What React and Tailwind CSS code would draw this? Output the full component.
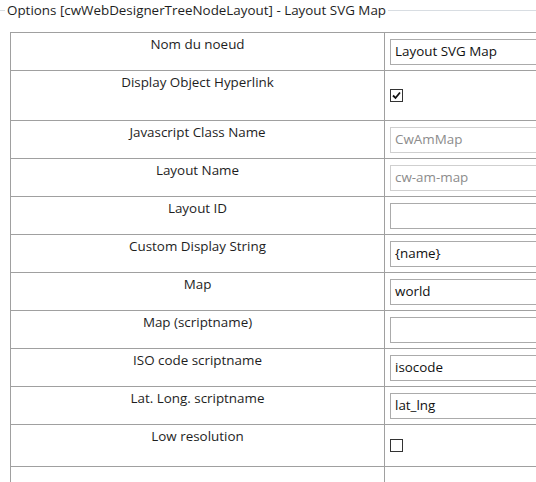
import React from "react";

const rows = [
  { label: "Nom du noeud", type: "text", value: "Layout SVG Map", h: "h-[38px]" },
  { label: "Display Object Hyperlink", type: "check", checked: true, h: "h-[50px]" },
  { label: "Javascript Class Name", type: "text", value: "CwAmMap", disabled: true, h: "h-[38px]" },
  { label: "Layout Name", type: "text", value: "cw-am-map", disabled: true, h: "h-[38px]" },
  { label: "Layout ID", type: "text", value: "", h: "h-[38px]" },
  { label: "Custom Display String", type: "text", value: "{name}", h: "h-[38px]" },
  { label: "Map", type: "text", value: "world", h: "h-[38px]" },
  { label: "Map (scriptname)", type: "text", value: "", h: "h-[38px]" },
  { label: "ISO code scriptname", type: "text", value: "isocode", h: "h-[38px]" },
  { label: "Lat. Long. scriptname", type: "text", value: "lat_lng", h: "h-[38px]" },
  { label: "Low resolution", type: "check", checked: false, h: "h-[42px]" },
  { label: "", type: "empty", h: "h-[40px]" },
];

function Checkbox({ checked }) {
  return (
    <div className="flex h-[13px] w-[13px] items-center justify-center border border-[#333333] bg-white">
      {checked && (
        <svg width="9" height="9" viewBox="0 0 9 9">
          <path d="M1 4.5 L3.5 7 L8 1.5" fill="none" stroke="#111" strokeWidth="1.8" />
        </svg>
      )}
    </div>
  );
}

export default function App() {
  return (
    <div
      className="h-[482px] w-[536px] overflow-hidden bg-white text-[14px] text-[#1e1e1e]"
      style={{ fontFamily: '"Open Sans", "Noto Sans", sans-serif' }}
    >
      {/* fieldset legend line */}
      <div className="flex h-[21px] items-center">
        <div className="h-px w-[5px] bg-[#d8dde2]" />
        <span className="px-[2px] text-[13.4px] leading-[21px] whitespace-nowrap">
          Options [cwWebDesignerTreeNodeLayout] - Layout SVG Map
        </span>
        <div className="h-px flex-1 bg-[#d8dde2]" />
      </div>

      {/* options table */}
      <div className="ml-[10px] mt-[11px] w-[600px] border-l border-[#a0a0a0]">
        {rows.map((r, i) => (
          <div key={i} className={`flex border-t border-[#a0a0a0] ${r.h}`}>
            <div className="w-[373px] pt-[2px] text-center text-[13.4px] leading-[19px] whitespace-nowrap">
              {r.label}
            </div>
            <div className="flex flex-1 items-center border-l border-[#a0a0a0] pl-[5px]">
              {r.type === "text" && (
                <div
                  className={`flex h-[26px] w-[220px] items-center border border-[#ababab] bg-white pl-[4px] text-[13.4px] ${
                    r.disabled ? "text-[#8c8c8c] border-[#cfcfcf]" : "text-[#111111]"
                  }`}
                >
                  {r.value}
                </div>
              )}
              {r.type === "check" && <Checkbox checked={r.checked} />}
            </div>
          </div>
        ))}
      </div>
    </div>
  );
}
